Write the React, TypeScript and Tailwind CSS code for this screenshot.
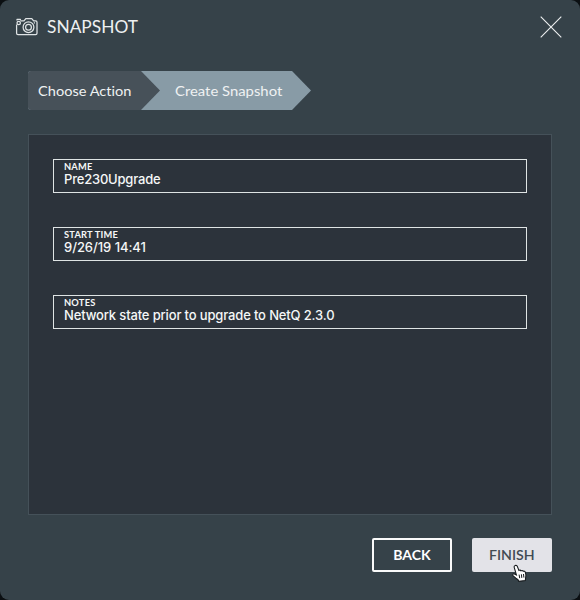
import React from 'react';

function CameraIcon() {
  return (
    <svg width="24" height="20" viewBox="0 0 24 20" fill="none" stroke="#dfe3e5" strokeWidth="1.25" strokeLinejoin="round">
      <path d="M1.6 7.6V16.2Q1.6 17.6 3 17.6H20.6Q22 17.6 22 16.2V5.2Q22 3.8 20.6 3.8H18.6L16.8 1.6H10.8L9 3.8H5.6" />
      <circle cx="3.7" cy="6" r="1.7" />
      <path d="M2 3.5V2.4H5.4V3.5" />
      <circle cx="13.5" cy="10.2" r="5.4" />
      <circle cx="13.5" cy="10.2" r="2.9" />
      <path d="M18.8 5.8H20" />
    </svg>
  );
}

function CloseIcon() {
  return (
    <svg width="22" height="22" viewBox="0 0 22 22" stroke="#eef0f1" strokeWidth="1.1">
      <path d="M.7.7 21.3 21.3M21.3.7.7 21.3" />
    </svg>
  );
}

function HandCursor() {
  return (
    <svg className="absolute left-[39px] top-[26px]" width="18" height="19" viewBox="0 0 18 19">
      <path
        d="M4.2 1.5C5.1 1.1 6 1.6 6.3 2.4L7.9 6.4C8.5 5.9 9.5 6 10 6.8C10.7 6.2 11.8 6.4 12.2 7.3C13 6.9 14 7.3 14.3 8.2C15 10.3 15.4 12 14.6 14L14.3 16.5L7.8 17.3L6.8 15.4C5.3 14.6 4 13.5 2.2 11.8C1.2 10.6 2.2 9.5 3.4 9.9L5.4 10.9L3.2 3.4C2.9 2.5 3.3 1.8 4.2 1.5Z"
        fill="#fff"
        stroke="#161a1d"
        strokeWidth="1.1"
      />
      <path d="M8.1 10.6 8.7 14.2M10.4 10.3 10.8 13.9M12.5 10 12.9 13.6" stroke="#161a1d" strokeWidth="1" />
    </svg>
  );
}

function Field({ label, value, spacing }: { label: string; value: string; spacing: string }) {
  return (
    <div className="flex h-[34.5px] flex-col border-[1.5px] border-[#dfe4e4] pl-[10px] pt-[2px] text-[#f5f7f7]">
      <span className="font-['Lato',sans-serif] text-[9.3px] leading-[10px] font-bold tracking-[0.2px]">{label}</span>
      <span className={`font-['Inter',sans-serif] text-[13px] leading-[15px] font-medium whitespace-nowrap ${spacing}`}>{value}</span>
    </div>
  );
}

export default function App() {
  return (
    <div className="h-[600px] w-[580px] bg-[#0b0f12]">
      <main className="flex h-full flex-col rounded-[9px] bg-[#364249] px-7 font-['Lato',sans-serif]">
        <header className="-mx-3 flex h-[54px] items-center text-[#eef0f1]">
          <div className="-ml-px">
            <CameraIcon />
          </div>
          <h1 className="ml-[8px] origin-left scale-x-[1.05] text-[16.5px] leading-6">SNAPSHOT</h1>
          <div className="mr-[2px] ml-auto">
            <CloseIcon />
          </div>
        </header>

        <nav className="mt-[17px] flex h-[39px] shrink-0 text-[13.5px] text-[#eff1f2] [font-variant-ligatures:none]">
          <div className="flex w-[283px] rounded-l-[3px] bg-[#889ba6] [clip-path:polygon(0_0,264px_0,283px_50%,264px_100%,0_100%)]">
            <div className="flex w-[133px] items-center rounded-l-[3px] bg-[#475159] pt-px pl-[10px] [clip-path:polygon(0_0,113px_0,132px_50%,113px_100%,0_100%)]">
              <span className="origin-left scale-x-[1.08] whitespace-nowrap">Choose Action</span>
            </div>
            <div className="flex items-center pt-px pl-[14px]">
              <span className="origin-left scale-x-[1.1] whitespace-nowrap">Create Snapshot</span>
            </div>
          </div>
        </nav>

        <section className="mt-6 flex h-[381px] shrink-0 flex-col gap-[33.5px] border border-[#455159] bg-[#2c333b] px-6 pt-[23.5px]">
          <Field label="NAME" value="Pre230Upgrade" spacing="tracking-[-0.2px]" />
          <Field label="START TIME" value="9/26/19 14:41" spacing="tracking-[-0.05px]" />
          <Field label="NOTES" value="Network state prior to upgrade to NetQ 2.3.0" spacing="tracking-[-0.15px]" />
        </section>

        <footer className="mt-[23px] flex justify-end gap-5 text-[13.5px]">
          <button className="flex h-[34px] w-20 items-center justify-center rounded-[2px] border-2 border-[#fafafa] pt-px font-bold text-white">
            <span className="scale-x-[1.04]">BACK</span>
          </button>
          <button className="relative flex h-[34px] w-20 items-center justify-center rounded-[2px] bg-[#e3e3e8] pt-px font-semibold text-[#414b54]">
            <span className="scale-x-[1.05]">FINISH</span>
            <HandCursor />
          </button>
        </footer>
      </main>
    </div>
  );
}
